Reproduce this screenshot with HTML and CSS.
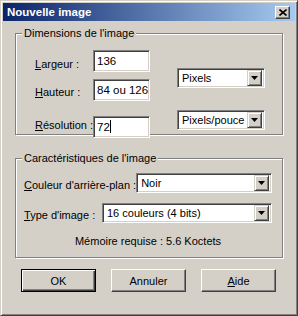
FILE: index.html
```html
<!DOCTYPE html>
<html lang="fr">

<head>
    <meta charset="UTF-8">
    <meta name="viewport" content="width=device-width, initial-scale=1.0">
    <title>Nouvelle image</title>
    <link rel="stylesheet" href="styles.css">
</head>

<body>
    <div class="window">
        <div class="titlebar">
            <span class="title">Nouvelle image</span>
            <button class="close">
                <svg width="8" height="7" viewBox="0 0 8 7">
                    <path d="M0.5 0.5 L7.5 6.5 M7.5 0.5 L0.5 6.5" stroke="#000" stroke-width="1.6" />
                </svg>
            </button>
        </div>

        <fieldset class="group dims">
            <legend>Dimensions de l'image</legend>
            <div class="dims-grid">
                <label class="lbl row1"><u>L</u>argeur :</label>
                <div class="field">136</div>
                <div class="select unit">
                    <span class="value">Pixels</span>
                    <span class="drop"><svg width="7" height="4" viewBox="0 0 7 4"><path d="M0 0 H7 L3.5 4 Z" fill="#000" /></svg></span>
                </div>

                <label class="lbl row2"><u>H</u>auteur :</label>
                <div class="field">84 ou 126</div>

                <label class="lbl row3"><u>R</u>ésolution :</label>
                <div class="field">72<span class="caret"></span></div>
                <div class="select res">
                    <span class="value">Pixels/pouce</span>
                    <span class="drop"><svg width="7" height="4" viewBox="0 0 7 4"><path d="M0 0 H7 L3.5 4 Z" fill="#000" /></svg></span>
                </div>
            </div>
        </fieldset>

        <fieldset class="group props">
            <legend>Caractéristiques de l'image</legend>
            <div class="props-body">
                <div class="prop-row">
                    <label class="lbl"><u>C</u>ouleur d'arrière-plan :</label>
                    <div class="select bg">
                        <span class="value">Noir</span>
                        <span class="drop"><svg width="7" height="4" viewBox="0 0 7 4"><path d="M0 0 H7 L3.5 4 Z" fill="#000" /></svg></span>
                    </div>
                </div>
                <div class="prop-row">
                    <label class="lbl"><u>T</u>ype d'image :</label>
                    <div class="select type">
                        <span class="value">16 couleurs (4 bits)</span>
                        <span class="drop"><svg width="7" height="4" viewBox="0 0 7 4"><path d="M0 0 H7 L3.5 4 Z" fill="#000" /></svg></span>
                    </div>
                </div>
                <div class="memory">Mémoire requise : 5.6 Koctets</div>
            </div>
        </fieldset>

        <div class="buttons">
            <button class="btn default">OK</button>
            <button class="btn">Annuler</button>
            <button class="btn"><u>A</u>ide</button>
        </div>
    </div>
</body>

</html>
```

FILE: styles.css
```css
* {
    margin: 0;
    box-sizing: border-box;
    font-family: 'Liberation Sans', Arial, sans-serif;
}

body {
    background-color: #d4d0c8;
    color: #000;
    font-size: 11px;
}

u {
    text-decoration: underline;
    text-underline-offset: 1px;
}

.window {
    width: 298px;
    height: 316px;
    background-color: #d4d0c8;
    border: 1px solid;
    border-color: #d4d0c8 #404040 #404040 #d4d0c8;
    box-shadow: inset 1px 1px #fff, inset -1px -1px #808080;
    padding: 2px;
}

.titlebar {
    height: 18px;
    display: flex;
    align-items: center;
    padding: 0 5px 0 4px;
    background: linear-gradient(to right, #0a246a, #a6caf0);
}

.title {
    color: #fff;
    font-weight: bold;
    font-size: 11.5px;
}

.close {
    margin-left: auto;
    width: 15px;
    height: 13px;
    padding: 0;
    display: flex;
    align-items: center;
    justify-content: center;
    background-color: #d4d0c8;
    border: 1px solid;
    border-color: #fff #404040 #404040 #fff;
    box-shadow: inset -1px -1px #808080;
}

/* group boxes */
.group {
    margin: 5px 12px 0;
    padding: 0;
    min-inline-size: 0;
    border: 1px solid #808080;
    box-shadow: inset 1px 1px #fff, 1px 1px #fff;
}

.group legend {
    margin-left: 6px;
    padding: 0 2px;
    line-height: 14px;
    background-color: #d4d0c8;
}

.dims-grid {
    display: grid;
    grid-template-columns: 58px 57px 115px;
    grid-template-rows: 22px 22px 22px;
    row-gap: 7px;
    padding: 10px 0 4px 19px;
}

.dims-grid .row2 {
    grid-row: 2;
}

.dims-grid .row3 {
    grid-row: 3;
    margin-top: 8px;
}

.dims-grid .row3 + .field,
.dims-grid .res {
    grid-row: 3;
    margin-top: 8px;
}

.lbl {
    line-height: 13px;
    white-space: nowrap;
    align-self: center;
    padding-top: 4px;
}

.dims-grid .row1 {
    padding-top: 7px;
}

.field {
    height: 22px;
    background-color: #fff;
    border: 1px solid;
    border-color: #808080 #fff #fff #808080;
    box-shadow: inset 1px 1px #404040, inset -1px -1px #d4d0c8;
    padding: 0 3px;
    line-height: 20px;
    font-size: 11.5px;
    white-space: nowrap;
}

.caret {
    display: inline-block;
    width: 1px;
    height: 13px;
    background-color: #000;
    vertical-align: -2px;
}

.select {
    height: 20px;
    display: flex;
    align-items: center;
    background-color: #fff;
    border: 1px solid;
    border-color: #808080 #fff #fff #808080;
    box-shadow: inset 1px 1px #404040, inset -1px -1px #d4d0c8;
    padding: 2px;
}

.select .value {
    flex: 1;
    padding-left: 2px;
    font-size: 11px;
    white-space: nowrap;
}

.drop {
    width: 15px;
    height: 16px;
    display: flex;
    align-items: center;
    justify-content: center;
    background-color: #d4d0c8;
    border: 1px solid;
    border-color: #d4d0c8 #404040 #404040 #d4d0c8;
    box-shadow: inset 1px 1px #fff, inset -1px -1px #808080;
}

.unit {
    grid-column: 3;
    grid-row: 1 / 3;
    margin: 18px 0 0 27px;
}

.res {
    grid-column: 3;
    align-self: end;
    margin-left: 27px;
}

.props {
    margin-top: 16px;
}

.props-body {
    padding: 8px 10px 9px 8px;
}

.prop-row {
    display: flex;
    justify-content: space-between;
    margin-bottom: 10px;
}

.prop-row .lbl {
    padding-top: 4px;
}

.bg {
    width: 138px;
}

.type {
    width: 170px;
}

.memory {
    text-align: center;
    line-height: 13px;
    margin-top: 12px;
}

.buttons {
    display: flex;
    gap: 15px;
    margin-top: 11px;
    padding-left: 18px;
}

.btn {
    width: 75px;
    height: 23px;
    padding: 0;
    font-size: 11px;
    color: #000;
    background-color: #d4d0c8;
    border: 1px solid;
    border-color: #fff #404040 #404040 #fff;
    box-shadow: inset -1px -1px #808080;
}

.btn.default {
    border-color: #000;
    box-shadow: inset 1px 1px #fff, inset -1px -1px #404040, inset -2px -2px #808080;
}
```
